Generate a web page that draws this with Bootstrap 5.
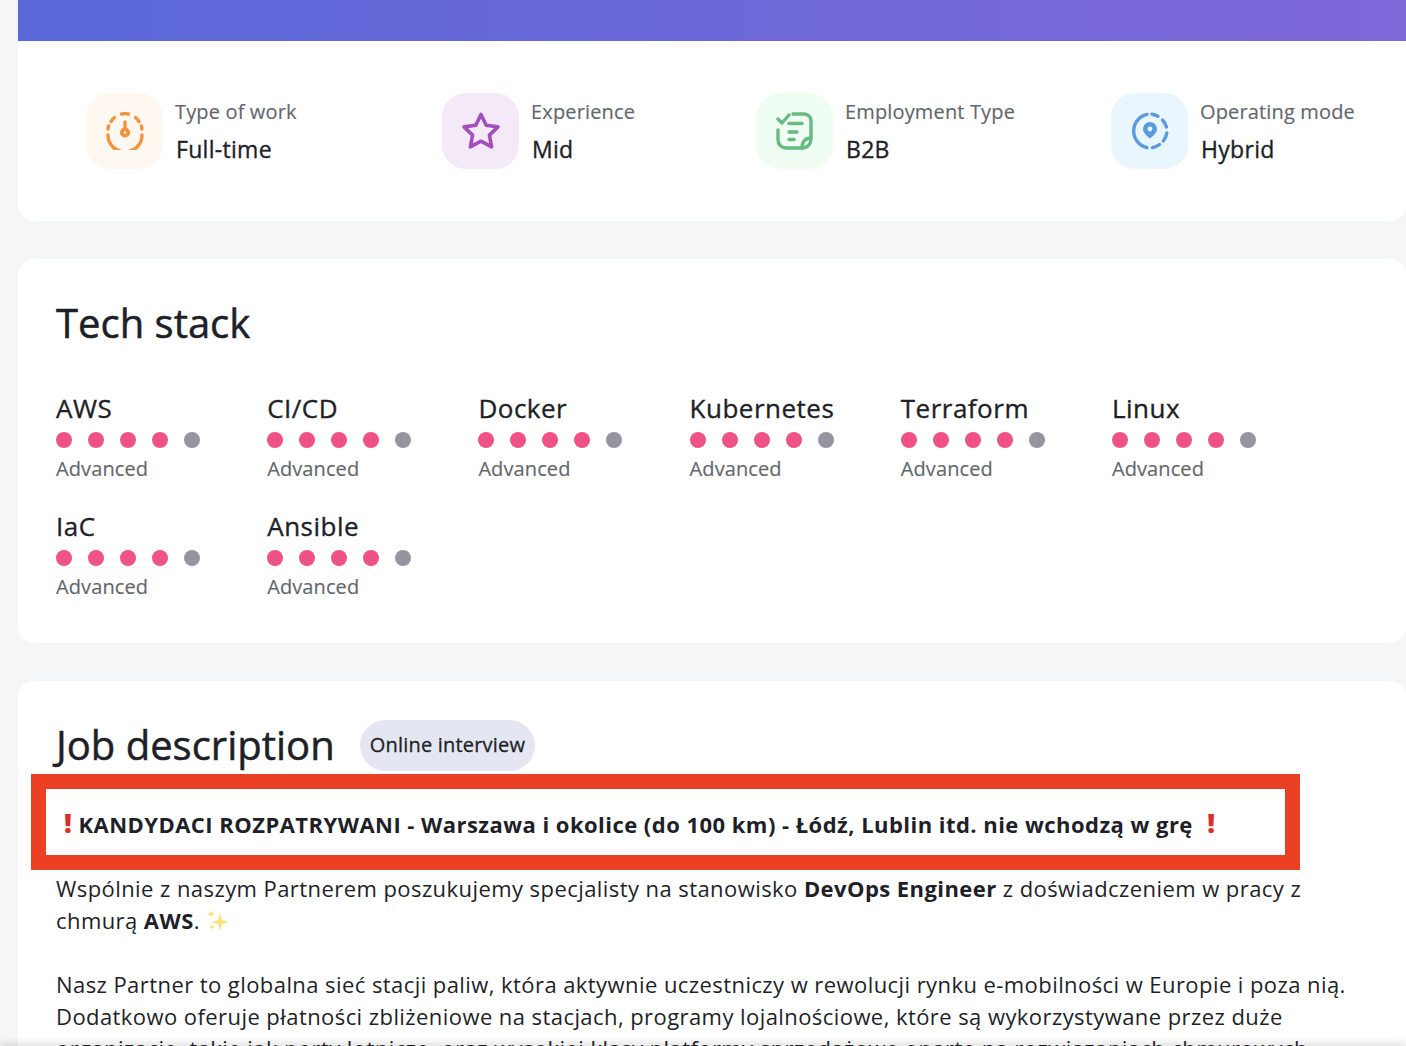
<!DOCTYPE html>
<html lang="en">
<head>
<meta charset="UTF-8">
<meta name="viewport" content="width=device-width, initial-scale=1.0">
<title>Job offer</title>
<link href="https://cdn.jsdelivr.net/npm/bootstrap@5.3.0/dist/css/bootstrap.min.css" rel="stylesheet">
<style>
  html, body { height: 1046px; overflow: hidden; }
  body { background: #f5f6f8; color: #1e1f28; font-family: "Open Sans", "Noto Sans", sans-serif; }
  .page-wrap { margin-left: 18px; position: relative; }
  .top-strip { height: 41px; background: linear-gradient(90deg, #5a69da, #7f67d8); }
  .panel { background: #fff; border-radius: 16px; padding: 0 38px; margin-bottom: 38px; }
  .panel-facts { height: 180px; border-radius: 0 0 16px 16px; padding: 52px 0 0 68px; }
  .fact-item { gap: 13px; }
  .fact-item:nth-child(1) { width: 356px; }
  .fact-item:nth-child(2) { width: 314px; }
  .fact-item:nth-child(3) { width: 355px; }
  .fact-tile { width: 77px; height: 76px; border-radius: 24px; flex: none; }
  .tile-orange { background: #fff8f0; }
  .tile-purple { background: #f3e9f7; }
  .tile-green { background: #f0fdf3; }
  .tile-blue { background: #eaf6fe; }
  .fact-label { font-size: 20px; line-height: 28px; color: #63676c; margin-top: 5px; margin-left: -1px; letter-spacing: .15px; -webkit-text-stroke: .15px currentColor; }
  .fact-value { font-size: 23px; line-height: 32px; margin-top: 7px; letter-spacing: .3px; -webkit-text-stroke: .35px currentColor; }
  .panel-heading { font-size: 40px; line-height: 52px; margin: 0; letter-spacing: 0; -webkit-text-stroke: .5px currentColor; }
  .panel-stack { height: 384px; padding-top: 38px; }
  .stack-grid { display: grid; grid-template-columns: repeat(6, 211.2px); row-gap: 26px; margin-top: 42px; }
  .stack-name { font-size: 26px; line-height: 34px; letter-spacing: .5px; -webkit-text-stroke: .35px currentColor; }
  .stack-dots { display: flex; gap: 16px; margin: 7px 0 7px; }
  .stack-dot { width: 16px; height: 16px; border-radius: 50%; background: #ef5285; }
  .stack-dot.off { background: #94959f; }
  .stack-level { font-size: 20px; line-height: 28px; color: #63676c; letter-spacing: .1px; -webkit-text-stroke: .15px currentColor; }
  .panel-desc { padding-top: 38px; font-size: 22px; line-height: 32px; height: 500px; letter-spacing: .43px; }
  .desc-pill { background: #e4e7f1; height: 51px; border-radius: 26px; padding: 0 10px; font-size: 20px; margin-left: 25px; letter-spacing: .2px; -webkit-text-stroke: .3px currentColor; }
  .desc-alert { font-weight: 700; height: 64px; margin-top: 22px; padding-left: 8px; padding-top: 14px; margin-bottom: 15px; white-space: nowrap; position: relative; letter-spacing: .46px; }
  .alert-mark { color: #dd2e2e; font-weight: 800; font-size: 27px; line-height: 32px; }
  .alert-mark-end { margin-left: 2px; }
  .red-frame { position: absolute; left: -25px; top: -19px; width: 1269px; height: 96px; border: 15px solid #ec4024; }
  .sparkle { vertical-align: -3px; }
  .desc-text { margin: 0 0 32px; }
  .bottom-shade { position: fixed; left: 0; right: 0; bottom: -8px; height: 8px; box-shadow: 0 -2px 8px rgba(0, 0, 0, .16); }
</style>
</head>
<body>
<div class="page-wrap">
  <div class="top-strip"></div>

  <!--Facts-->
  <div class="panel panel-facts d-flex">
    <div class="fact-item d-flex">
      <div class="fact-tile tile-orange d-flex align-items-center justify-content-center">
        <svg width="38" height="38" viewBox="0 0 38 38" fill="none" stroke="#f2933f" stroke-width="3.400" stroke-linecap="round">
          <path d="M2 23a17 17 0 0 0 34 0"/>
          <path d="M2 17a17 17 0 0 1 .6-3" />
          <path d="M5 9.500a17 17 0 0 1 3.500-4" />
          <path d="M15.500 2a17 17 0 0 1 7 0" />
          <path d="M29.500 5.500a17 17 0 0 1 3.500 4" />
          <path d="M35.400 14a17 17 0 0 1 .6 3" />
          <path d="M19 10v7"/>
          <circle cx="19" cy="20.500" r="3.200" fill="#fff8f0" stroke-width="3.800"/>
        </svg>
      </div>
      <div>
        <div class="fact-label">Type of work</div>
        <div class="fact-value">Full-time</div>
      </div>
    </div>
    <div class="fact-item d-flex">
      <div class="fact-tile tile-purple d-flex align-items-center justify-content-center">
        <svg width="40" height="38" viewBox="0 0 40 38" fill="none" stroke="#a44fbe" stroke-width="3.600" stroke-linejoin="round">
          <path d="M20 2.500l5.200 10.800 11.800 1.600-8.600 8.200 2.200 11.800L20 29.200 9.400 34.900l2.200-11.800L3 14.900l11.800-1.600z"/>
        </svg>
      </div>
      <div>
        <div class="fact-label">Experience</div>
        <div class="fact-value">Mid</div>
      </div>
    </div>
    <div class="fact-item d-flex">
      <div class="fact-tile tile-green d-flex align-items-center justify-content-center">
        <svg width="38" height="38" viewBox="0 0 38 38" fill="none" stroke="#66bb82" stroke-width="3.400" stroke-linecap="round" stroke-linejoin="round">
          <path d="M2 7l4 4 7-8"/>
          <path d="M17 2h11a7 7 0 0 1 7 7v17"/>
          <path d="M2 18v10a8 8 0 0 0 8 8h16"/>
          <path d="M35 26c-5 0-9 3-9 10 6 0 9-4 9-10z"/>
          <path d="M13 11.500h13"/>
          <path d="M13 20h8"/>
          <path d="M13 27.500h5"/>
        </svg>
      </div>
      <div>
        <div class="fact-label">Employment Type</div>
        <div class="fact-value">B2B</div>
      </div>
    </div>
    <div class="fact-item d-flex">
      <div class="fact-tile tile-blue d-flex align-items-center justify-content-center">
        <svg width="38" height="38" viewBox="0 0 38 38" fill="none" stroke="#5a9be0" stroke-width="3.400" stroke-linecap="round">
          <path d="M16 2.400A17 17 0 0 0 16 35.600"/>
          <path d="M21 2.200a17 17 0 0 1 6 2"/>
          <path d="M31.500 8a17 17 0 0 1 4 7"/>
          <path d="M35.800 21a17 17 0 0 1-3.600 8"/>
          <path d="M28.500 32.500a17 17 0 0 1-7 3.200"/>
          <path fill-rule="evenodd" stroke="none" fill="#5a9be0" d="M19 10a7 7 0 0 0-7 7c0 4 4 7 7 9.500 3-2.500 7-5.500 7-9.500a7 7 0 0 0-7-7zm0 4.600a2.400 2.400 0 1 1 0 4.800 2.400 2.400 0 0 1 0-4.800z"/>
        </svg>
      </div>
      <div>
        <div class="fact-label">Operating mode</div>
        <div class="fact-value">Hybrid</div>
      </div>
    </div>
  </div>

  <!--Tech stack-->
  <div class="panel panel-stack">
    <h2 class="panel-heading">Tech stack</h2>
    <div class="stack-grid" id="stackGrid"></div>
  </div>

  <!--Description-->
  <div class="panel panel-desc">
    <div class="d-flex align-items-center">
      <h2 class="panel-heading">Job description</h2>
      <span class="desc-pill d-flex align-items-center">Online interview</span>
    </div>
    <div class="desc-alert">
      <div class="red-frame"></div>
      <span class="alert-mark">!</span> KANDYDACI ROZPATRYWANI - Warszawa i okolice (do 100 km) - Łódź, Lublin itd. nie wchodzą w grę &nbsp;<span class="alert-mark alert-mark-end">!</span>
    </div>
    <p class="desc-text">Wspólnie z naszym Partnerem poszukujemy specjalisty na stanowisko <strong>DevOps Engineer</strong> z doświadczeniem w pracy z chmurą <strong>AWS</strong>.
      <svg class="sparkle" width="24" height="24" viewBox="0 0 24 24" fill="#fbe27f"><path d="M14 5l2 7 7 2-7 2-2 7-2-7-7-2 7-2z"/><path d="M5 2l1 3 3 1-3 1-1 3-1-3-3-1 3-1z"/><path d="M6 16l.8 2.200L9 19l-2.200.8L6 22l-.8-2.200L3 19l2.200-.8z"/></svg>
    </p>
    <p class="desc-text">Nasz Partner to globalna sieć stacji paliw, która aktywnie uczestniczy w rewolucji rynku e-mobilności w Europie i poza nią. Dodatkowo oferuje płatności zbliżeniowe na stacjach, programy lojalnościowe, które są wykorzystywane przez duże organizacje, takie jak porty lotnicze, oraz wysokiej klasy platformy sprzedażowe oparte na rozwiązaniach chmurowych.</p>
  </div>
</div>
<div class="bottom-shade"></div>

<script src="https://cdn.jsdelivr.net/npm/bootstrap@5.3.0/dist/js/bootstrap.bundle.min.js"></script>
<script>
  const stack = ["AWS", "CI/CD", "Docker", "Kubernetes", "Terraform", "Linux", "IaC", "Ansible"];
  const grid = document.getElementById("stackGrid");
  stack.forEach(name => {
    grid.innerHTML += `
      <div>
        <div class="stack-name">${name}</div>
        <div class="stack-dots">
          <span class="stack-dot"></span><span class="stack-dot"></span><span class="stack-dot"></span><span class="stack-dot"></span><span class="stack-dot off"></span>
        </div>
        <div class="stack-level">Advanced</div>
      </div>`;
  });
</script>
</body>
</html>
